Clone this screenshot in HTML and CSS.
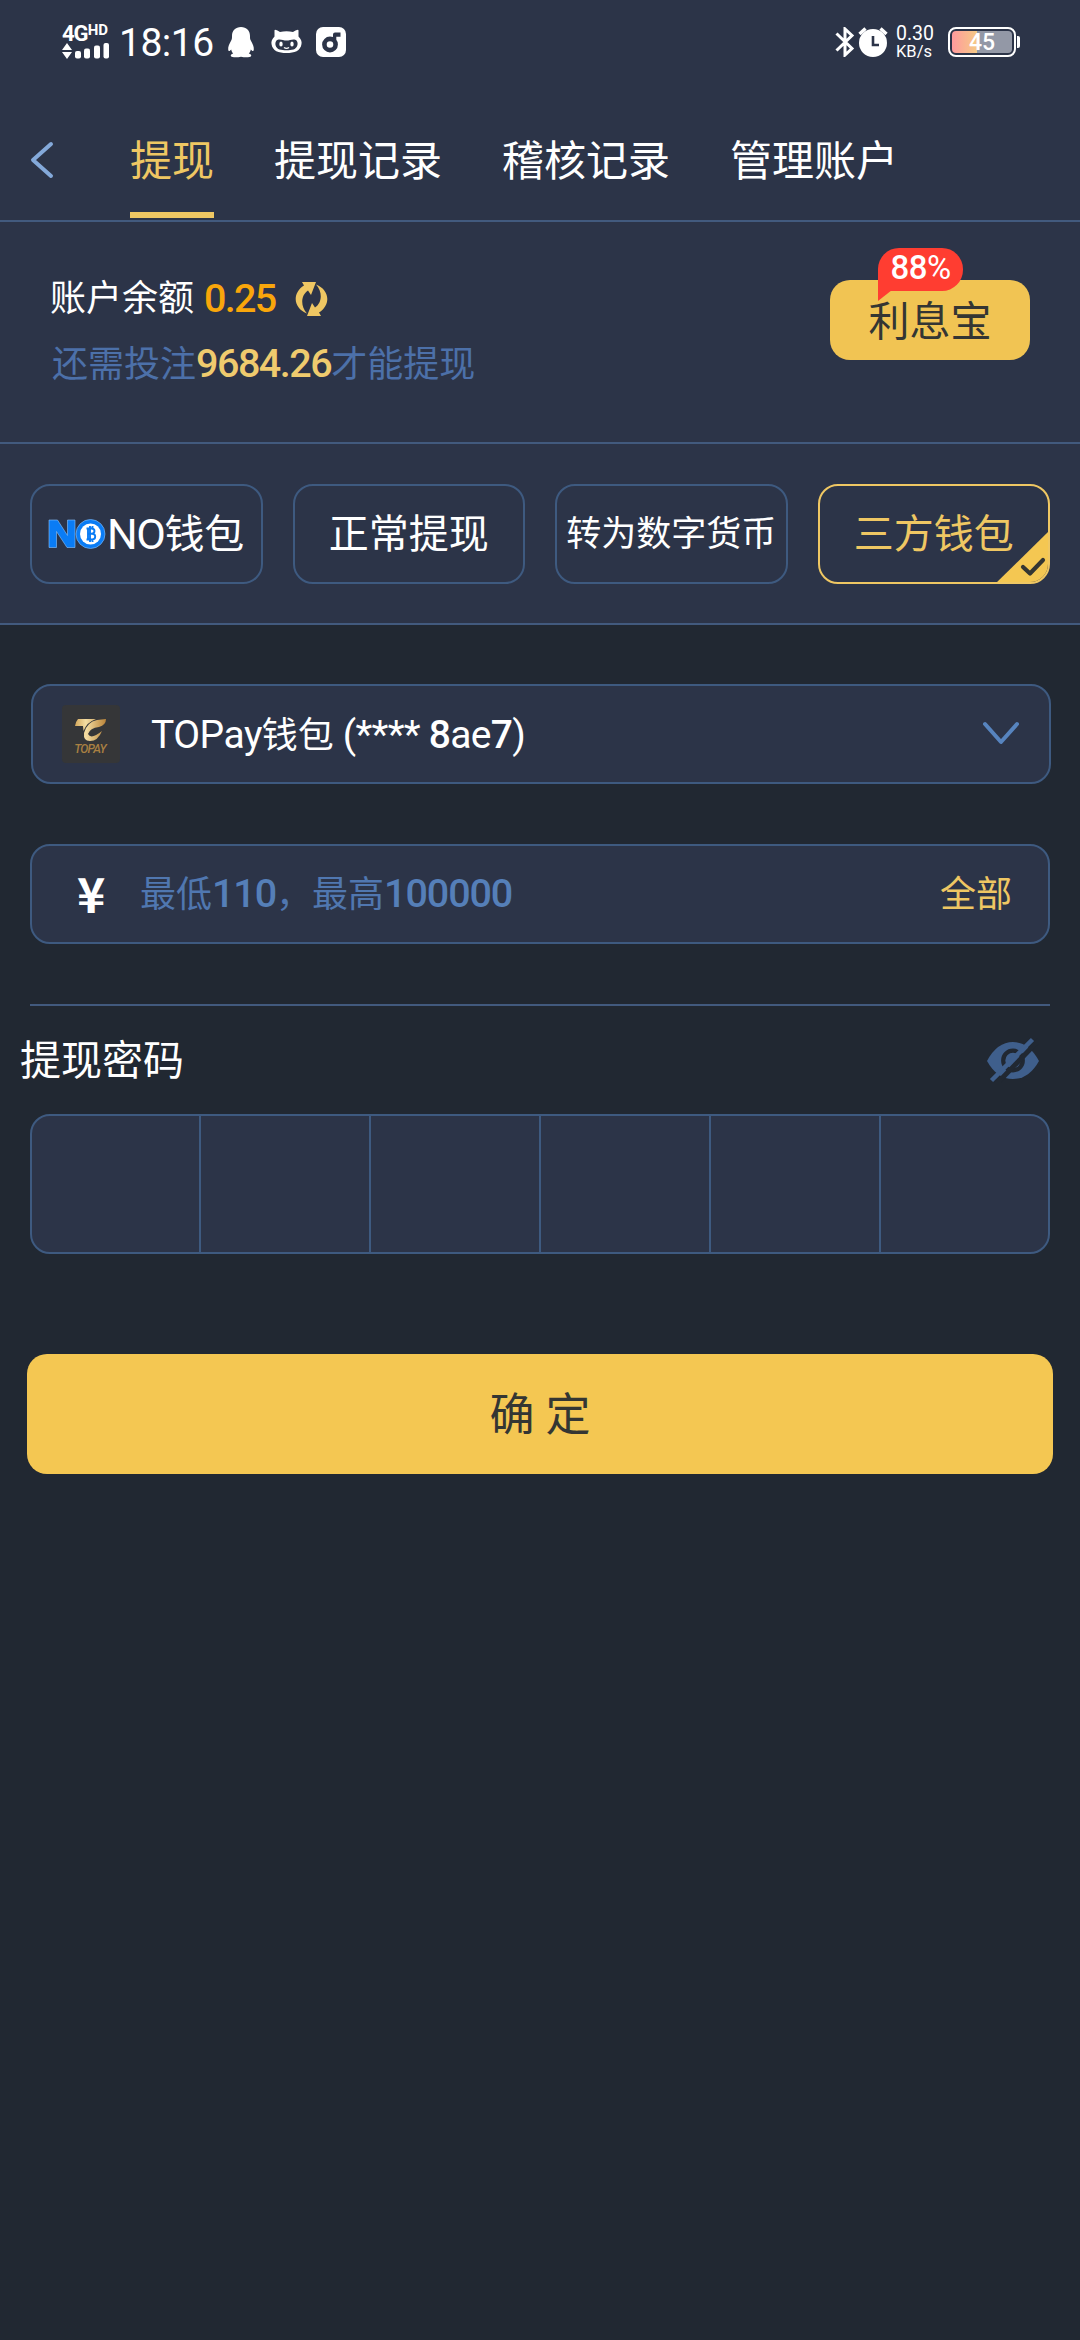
FILE: index.html
```html
<!DOCTYPE html>
<html lang="zh-CN">
<head>
<meta charset="utf-8">
<title>提现</title>
<link rel="stylesheet" href="styles.css">
</head>
<body>
<div class="status">
  <div class="status-left">
    <div class="network">
      <div class="net-label"><span class="net-gen">4G</span><span class="net-hd">HD</span></div>
      <svg class="signal" width="48" height="17" viewBox="0 0 48 17" fill="#fff"><path d="M5 0l5 7H0zM0 9h10l-5 7z"/><rect x="13" y="8" width="6" height="7.500" rx="2"/><rect x="22" y="5.500" width="6" height="10" rx="2"/><rect x="32" y="2.500" width="6" height="13" rx="2"/><rect x="41.500" y="0" width="5.500" height="15.500" rx="2"/></svg>
    </div>
    <span class="time">18:16</span>
    <svg class="qq" width="26" height="31" viewBox="0 0 26 31" fill="#fff"><path d="M13 0c5.500 0 9 3.500 9 9 0 2 0 3 .8 4.600C25 17.500 26 20 25.800 22.500c-.3 2.500-1.800 1.500-3 0-.3 1.700-1 3-2 4 2 .8 3 1.500 2.200 2.800-.8 1.300-6.500 1.400-10 .4-3.500 1-9.200.9-10-.4-.8-1.300.2-2 2.200-2.800-1-1-1.700-2.300-2-4-1.200 1.500-2.700 2.500-3 0C0 20 1 17.500 3.200 13.600 4 12 4 11 4 9c0-5.500 3.500-9 9-9z"/></svg>
    <svg class="cat" width="31" height="26" viewBox="0 0 31 26"><path fill="#fff" d="M3.500 1.500C3.500.3 5 .5 9 3c4-1 9-1 13 0 4-2.500 5.500-2.700 5.500-1.500v6C30 10 31 12.500 30.500 15c-1 7-7 9-15 9s-14-2-15-9C0 12.500 1 10 3.500 7.500z"/><path fill="#2c3448" d="M5.500 11.500C8 9 12 11.500 15.500 11.500S23 9 25.500 11.500c2.500 3 .5 8-3 9-4 1-10 1-14 0-3.500-1-5.500-6-3-9z"/><ellipse cx="10" cy="15" rx="1.700" ry="2.600" fill="#fff"/><ellipse cx="21" cy="15" rx="1.700" ry="2.600" fill="#fff"/><path d="M13 18.500q2.500 1.800 5 0" stroke="#fff" stroke-width="1.400" fill="none"/></svg>
    <svg class="music" width="30" height="30" viewBox="0 0 30 30"><rect width="30" height="30" rx="7" fill="#fff"/><circle cx="14" cy="17.500" r="5.600" fill="none" stroke="#2c3448" stroke-width="4.600"/><path d="M17 15V7.500q0-2 2-2h5.500v4.300h-4.200V17z" fill="#2c3448"/></svg>
  </div>
  <div class="status-right">
    <svg width="20" height="30" viewBox="0 0 20 30" fill="none" stroke="#fff" stroke-width="3"><path d="M1.500 6.500l15.500 15L10 28V2l7 6.500-15.500 15"/></svg>
    <svg class="alarm" width="30" height="30" viewBox="0 0 30 30"><circle cx="15" cy="16" r="14" fill="#fff"/><path d="M1.500 7l6-5.500M28.500 7l-6-5.500" stroke="#fff" stroke-width="3.400"/><path d="M15 9v9h6" fill="none" stroke="#2c3448" stroke-width="2.600"/></svg>
    <div class="speed"><span class="speed-num">0.30</span><span class="speed-unit">KB/s</span></div>
    <div class="battery"><div class="battery-body">45</div><div class="battery-tip"></div></div>
  </div>
</div>

<header class="header">
  <svg class="back" width="24" height="40" viewBox="0 0 24 40" fill="none" stroke="#84a9da" stroke-width="4" stroke-linecap="round" stroke-linejoin="round"><path d="M21 4L3 20l18 16"/></svg>
  <nav class="tabs">
    <a class="tab tab-on">提现</a><a class="tab">提现记录</a><a class="tab">稽核记录</a><a class="tab">管理账户</a>
  </nav>
</header>

<section class="balance">
  <div class="balance-info">
    <div class="balance-row">账户余额<b class="num amount">0.25</b>
      <svg width="33" height="36" viewBox="0 0 33 36" fill="#efc763"><path d="M7 1h14l-5 13-3-4.500C6 14 5 25 12 32.500-2 27-3 12 9 4.500z"/><path d="M26 35H12l5-13 3 4.500C27 22 28 11 21 3.500 35 9 36 24 24 31.500z"/></svg>
    </div>
    <div class="turnover">还需投注<b class="num required">9684.26</b>才能提现</div>
  </div>
  <div class="interest">利息宝
    <div class="badge"><span class="badge-num">88</span>%<svg class="badge-tail" width="14" height="20" viewBox="0 0 14 20"><path d="M0 0h14v9L0 20z" fill="#ff3d31"/></svg></div>
  </div>
</section>

<section class="methods">
  <div class="method">
    <svg class="nono" width="58" height="30" viewBox="0 0 58 30"><path d="M1 28.500V1h8.500l10 15.500V1H27v27.500h-8L8.500 12.500v16z" fill="#0a7cf5" stroke="#8cc4ff" stroke-width=".6"/><circle cx="42.500" cy="15" r="14.500" fill="#0a7cf5" stroke="#8cc4ff" stroke-width=".6"/><circle cx="42.500" cy="15" r="10.500" fill="#fff"/><path d="M38.500 9.500h5q3 0 3 2.600t-3 2.600h-3 3.700q3 0 3 2.900t-3 2.900h-5.700M40 9.500v11M42 7v16M44.500 7v2.500M44.500 20.500V23" fill="none" stroke="#0a7cf5" stroke-width="1.900"/></svg><span class="latin">NO</span>钱包
  </div>
  <div class="method">正常提现</div>
  <div class="method method-small">转为数字货币</div>
  <div class="method method-on">三方钱包
    <svg class="corner" width="55" height="54" viewBox="0 0 55 54"><path d="M55 0v54H0z" fill="#f4c752"/><path d="M28 37l7 6.500L48 30" fill="none" stroke="#343633" stroke-width="4.200" stroke-linecap="round" stroke-linejoin="round"/></svg>
  </div>
</section>

<main class="form">
  <div class="field account">
    <div class="logo">
      <svg width="32" height="26" viewBox="0 0 32 26"><defs><linearGradient id="gold" x1="0" x2="1"><stop offset="0" stop-color="#d3a75b"/><stop offset=".35" stop-color="#f3dda3"/><stop offset="1" stop-color="#b98338"/></linearGradient></defs><path fill="url(#gold)" d="M3 2h18Q12 5 8.500 14L8 9H0q1-5 3-7zM31 2q0 6-7 8-9 1-11 7 3 6 14-3-4 10-12 10-7 0-6-8Q12 5 22 3z"/></svg>
      <span class="logo-text">TOPAY</span>
    </div>
    <div class="account-name"><span class="topay">TOPay</span>钱包<span class="mask"> (**** <b>8</b>ae<b>7</b>)</span></div>
    <svg width="40" height="28" viewBox="0 0 40 28" fill="none" stroke="#5784bf" stroke-width="4" stroke-linecap="round" stroke-linejoin="round"><path d="M4 4l16 18L36 4"/></svg>
  </div>
  <div class="field amount-field">
    <span class="yen">¥</span>
    <span class="placeholder">最低<b class="num">110</b>，最高<b class="num">100000</b></span>
    <span class="all">全部</span>
  </div>
  <hr class="rule">
  <div class="password-head">
    <span>提现密码</span>
    <svg width="52" height="46" viewBox="0 0 52 46"><path d="M0 24Q10 5 26 5t26 19Q42 42 26 42T0 24z" fill="#3f5f8c"/><circle cx="26" cy="23.500" r="9.800" fill="none" stroke="#212832" stroke-width="4.200"/><path d="M8.500 48L52 3" stroke="#212832" stroke-width="5"/><path d="M4.500 43.500L45.500 2.500" stroke="#3f5f8c" stroke-width="4.500"/></svg>
  </div>
  <div class="code"><i></i><i></i><i></i><i></i><i></i><i></i></div>
  <div class="submit">确 定</div>
</main>
</body>
</html>
```
FILE: styles.css
```css
* { box-sizing: border-box; }
body {
  margin: 0;
  width: 1080px;
  min-height: 2340px;
  background: #212832;
  color: #fff;
  font-family: Roboto, "Noto Sans CJK SC", sans-serif;
  font-size: 36px;
  line-height: 1.3;
}
svg { display: block; flex: none; }
b { font-weight: 500; }

/* status bar */
.status {
  height: 84px;
  padding: 0 60px 0 62px;
  background: #2c3448;
  display: flex;
  justify-content: space-between;
}
.status-left, .status-right { display: flex; align-items: center; }
.network { width: 50px; padding-top: 1px; }
.net-label { display: flex; height: 18px; line-height: 18px; font-weight: 700; }
.net-gen { font-size: 22px; letter-spacing: -1px; line-height: 18px; }
.net-hd { font-size: 15px; line-height: 11px; }
.time { font-size: 39px; line-height: 40px; margin: 2px 0 0 7px; width: 98px; letter-spacing: -.5px; }
.qq { margin-left: 11px; }
.cat { margin-left: 17px; }
.music { margin-left: 14px; }
.alarm { margin-left: 3px; }
.speed { width: 38px; margin-left: 8px; display: flex; flex-direction: column; }
.speed-num { font-size: 19.500px; line-height: 18px; }
.speed-unit { font-size: 16.500px; line-height: 17px; }
.battery { display: flex; align-items: center; margin: 0 0 0 14px; }
.battery-body {
  width: 68px;
  height: 30px;
  padding: 2px;
  border: 2px solid #fff;
  border-radius: 8px;
  background: linear-gradient(90deg, #ff9a9d, #f5ca85 42%, #9398a6 42%) content-box;
  font-size: 23px;
  font-weight: 500;
  line-height: 23px;
  text-align: center;
}
.battery-tip { width: 3px; height: 12px; margin-left: 1px; background: #fff; border-radius: 0 2px 2px 0; }

/* navigation */
.header {
  height: 138px;
  padding: 0 30px;
  background: #2c3448;
  border-bottom: 2px solid #425a7e;
  display: flex;
}
.back { margin: 56px 76px 0 0; }
.tabs { display: flex; gap: 60px; }
.tab { height: 134px; padding-top: 50px; font-size: 42px; line-height: 56px; }
.tab-on { color: #efc763; border-bottom: 6px solid #efc763; }

/* balance */
.balance {
  height: 222px;
  padding: 49px 50px 0;
  background: #2c3448;
  border-bottom: 2px solid #425a7e;
  display: flex;
  justify-content: space-between;
  align-items: flex-start;
}
.balance-info { padding-top: 1px; }
.balance-row { display: flex; align-items: center; height: 54px; }
.num { font-size: 39.500px; letter-spacing: -1.700px; line-height: 1; }
.amount { color: #f9a60b; margin: 0 19px 0 10px; }
.turnover { margin: 12px 0 0 2px; line-height: 54px; color: #4c70a9; }
.required { color: #efcb6e; letter-spacing: -1.500px; }
.interest {
  position: relative;
  width: 200px;
  height: 80px;
  margin-top: 9px;
  border-radius: 20px;
  background: #f1c453;
  color: #343633;
  font-size: 41px;
  line-height: 84px;
  text-align: center;
}
.badge {
  position: absolute;
  left: 48px;
  top: -32px;
  width: 85px;
  height: 43px;
  border-radius: 21px 21px 21px 0;
  background: #ff3d31;
  color: #fff;
  font-size: 33px;
  line-height: 39px;
  letter-spacing: -.5px;
}
.badge-num { font-weight: 500; }
.badge-tail { position: absolute; left: 0; top: 33px; }

/* withdrawal methods */
.methods {
  height: 181px;
  padding: 40px 30px 0;
  background: #2c3448;
  border-bottom: 2px solid #425a7e;
  display: grid;
  grid-template-columns: repeat(4, 1fr);
  column-gap: 30px;
}
.method {
  position: relative;
  height: 100px;
  padding-top: 2px;
  border: 2px solid #3e5a80;
  border-radius: 20px;
  overflow: hidden;
  display: flex;
  align-items: center;
  justify-content: center;
  font-size: 40px;
  white-space: nowrap;
}
.method-small { font-size: 35px; }
.method-on { border-color: #efc763; color: #efc763; }
.nono { margin: 0 1px 2px 0; }
.latin { font-size: 43px; letter-spacing: -1.500px; }
.corner { position: absolute; right: -2px; bottom: -2px; }

/* form */
.form { padding: 59px 30px 0; }
.field {
  height: 100px;
  border: 2px solid #3e5a80;
  border-radius: 20px;
  background: #2c3448;
  display: flex;
  align-items: center;
}
.account { margin: 0 -1px 60px 1px; padding: 0 28px 0 29px; }
.logo {
  width: 58px;
  height: 58px;
  border-radius: 4px;
  background: #353638;
  display: flex;
  flex-direction: column;
  align-items: center;
  padding-top: 12px;
}
.logo-text { font-size: 12px; line-height: 13px; font-style: italic; font-weight: 500; color: #a98042; letter-spacing: -.8px; transform: translateX(-1px); }
.account-name { flex: 1; padding: 2px 0 0 31px; white-space: pre; }
.topay { font-size: 39px; letter-spacing: -.500px; }
.mask { font-size: 39px; letter-spacing: -.700px; }
.amount-field { padding: 0 36px 0 43px; }
.yen { width: 65px; padding-left: 2px; font-family: "Noto Sans CJK SC", sans-serif; font-size: 48px; font-weight: 700; line-height: 60px; margin-top: -4px; }
.placeholder { flex: 1; padding-top: 3px; color: #5077b0; }
.placeholder .num { color: #557fb8; letter-spacing: -1.100px; }
.all { padding-top: 3px; color: #efc763; }
.rule { height: 2px; margin: 60px 0 0; border: 0; background: #425a7e; }
.password-head {
  height: 108px;
  padding: 0 11px 0 0;
  margin-left: -10px;
  display: flex;
  align-items: center;
  justify-content: space-between;
  font-size: 41px;
}
.password-head span { padding-top: 3px; }
.code {
  height: 140px;
  border: 2px solid #3e5a80;
  border-radius: 20px;
  background: #2c3448;
  display: grid;
  grid-template-columns: 167px repeat(4, 170px) 1fr;
}
.code i + i { border-left: 2px solid #3e5a80; }
.submit {
  height: 120px;
  margin: 100px -3px 0;
  border-radius: 20px;
  background: #f4c752;
  color: #343633;
  font-size: 45px;
  line-height: 124px;
  text-align: center;
}
```
